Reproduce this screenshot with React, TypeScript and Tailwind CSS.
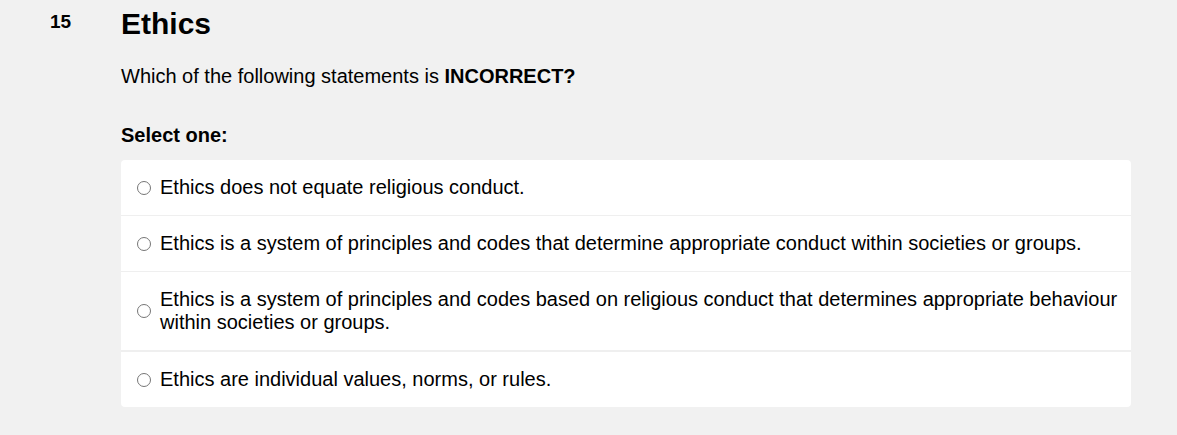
import { useState } from 'react'

const options = [
  'Ethics does not equate religious conduct.',
  'Ethics is a system of principles and codes that determine appropriate conduct within societies or groups.',
  'Ethics is a system of principles and codes based on religious conduct that determines appropriate behaviour within societies or groups.',
  'Ethics are individual values, norms, or rules.',
]

export default function App() {
  const [selected, setSelected] = useState<number | null>(null)

  return (
    <div className="min-h-[435px] bg-[#f1f1f1] text-black font-['Liberation_Sans',Arial,sans-serif]">
      <div className="flex">
        {/* Question number */}
        <div className="w-[121px] shrink-0 pl-[50px] pt-[11px]">
          <span className="block text-[19px] font-bold leading-[22px]">15</span>
        </div>

        {/* Question body */}
        <div className="w-[1010px]">
          <h2 className="pt-[6px] text-[30px] font-bold leading-[36px]">Ethics</h2>
          <p className="mt-[23px] text-[20px] leading-[23px]">
            Which of the following statements is <b>INCORRECT?</b>
          </p>
          <p className="mt-[36px] text-[20px] font-bold leading-[23px]">Select one:</p>

          <div className="mt-[13px] flex flex-col gap-px overflow-hidden rounded bg-[#efefef]">
            {options.map((text, i) => (
              <label
                key={i}
                className={`flex cursor-pointer items-center gap-[9px] bg-white py-[16px] pl-[16px] pr-[10px] text-[20px] leading-[23px] ${
                  i === 3 ? 'mt-px' : ''
                }`}
              >
                <input
                  type="radio"
                  name="q15"
                  checked={selected === i}
                  onChange={() => setSelected(i)}
                  className="h-[14px] w-[14px] shrink-0 appearance-none rounded-full border border-[#767676] bg-white checked:border-[4px] checked:border-[#0f6cbf]"
                />
                <span>{text}</span>
              </label>
            ))}
          </div>
        </div>
      </div>
    </div>
  )
}
